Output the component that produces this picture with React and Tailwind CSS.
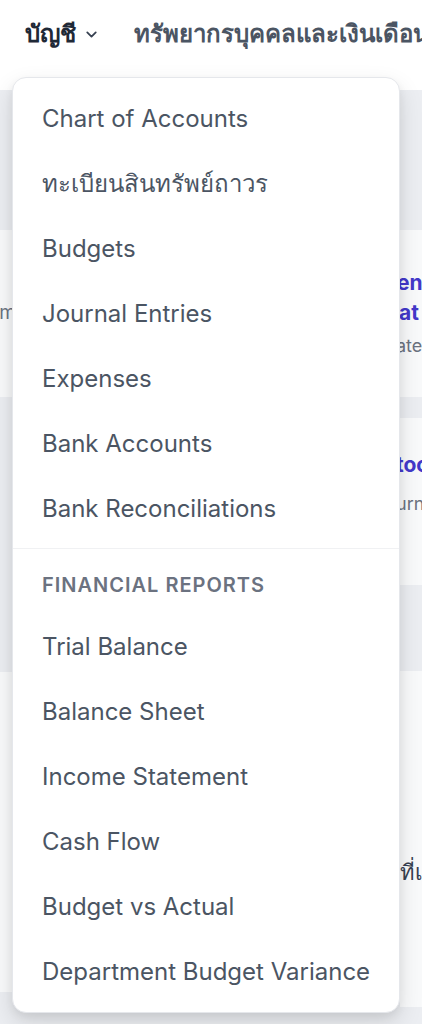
import React from 'react';

const mainItems = [
  'Chart of Accounts',
  'ทะเบียนสินทรัพย์ถาวร',
  'Budgets',
  'Journal Entries',
  'Expenses',
  'Bank Accounts',
  'Bank Reconciliations',
];

const reportItems = [
  'Trial Balance',
  'Balance Sheet',
  'Income Statement',
  'Cash Flow',
  'Budget vs Actual',
  'Department Budget Variance',
];

const MenuItem = ({ label }) => (
  <div className="h-[65px] flex items-center px-[29px] text-[24px] text-[#4b5563] whitespace-nowrap">
    {label}
  </div>
);

const App = () => {
  return (
    <div className="relative w-[422px] h-[1024px] overflow-hidden bg-[#eceef2] font-['Inter','Noto_Sans',sans-serif]">
      {/* top nav */}
      <div className="h-[90px] bg-white flex items-start pt-[16px] pl-[25px] gap-[34px] whitespace-nowrap">
        <div className="flex items-center gap-[7px]">
          <span className="text-[24px] font-bold text-[#1f2937]">บัญชี</span>
          <svg className="w-[17px] h-[17px] text-[#374151]" viewBox="0 0 24 24" fill="none" stroke="currentColor" strokeWidth={2.5} strokeLinecap="round" strokeLinejoin="round">
            <path d="M6 9l6 6 6-6" />
          </svg>
        </div>
        <span className="text-[24px] font-semibold text-[#4b5563]">ทรัพยากรบุคคลและเงินเดือน</span>
      </div>

      {/* page content behind the menu */}
      <div className="flex justify-between pt-[140px]">
        <div className="w-[12px] flex flex-col">
          <div className="h-[167px] bg-[#f9fafb] flex items-center justify-end overflow-hidden">
            <span className="text-[19px] text-[#6b7280] -mr-[4px]">m</span>
          </div>
          <div className="h-[320px] mt-[275px] bg-[#f9fafb]" />
        </div>
        <div className="w-[22px] flex flex-col">
          <div className="h-[167px] bg-[#f9fafb] overflow-hidden pt-[38px] whitespace-nowrap">
            <div className="-ml-[3px] text-[21px] font-bold text-[#4338ca] leading-[30px]">en</div>
            <div className="-ml-[1px] text-[21px] font-bold text-[#4338ca] leading-[30px]">at</div>
            <div className="-ml-[4px] mt-[6px] text-[18px] text-[#6b7280] leading-[24px]">ate</div>
          </div>
          <div className="h-[167px] mt-[21px] bg-[#f9fafb] overflow-hidden pt-[32px] whitespace-nowrap">
            <div className="-ml-[4px] text-[21px] font-bold text-[#4338ca] leading-[30px]">too</div>
            <div className="-ml-[4px] mt-[12px] text-[18px] text-[#6b7280] leading-[24px]">urn</div>
          </div>
          <div className="h-[336px] mt-[86px] bg-[#f9fafb] overflow-hidden pt-[186px] whitespace-nowrap">
            <div className="text-[22px] text-[#374151] leading-[30px]">ที่เ</div>
          </div>
        </div>
      </div>

      {/* dropdown menu */}
      <div className="absolute left-[12px] top-[77px] w-[388px] bg-white border border-[#e5e7eb] rounded-[14px] shadow-[0_10px_25px_rgba(0,0,0,0.12),0_4px_8px_rgba(0,0,0,0.06)] py-[8px]">
        {mainItems.map((item) => (
          <MenuItem key={item} label={item} />
        ))}
        <div className="my-[7px] border-t border-[#f0f1f3]" />
        <div className="px-[29px] pt-[17px] pb-[17px] text-[20px] leading-[24px] font-semibold tracking-[0.05em] text-[#6b7280] uppercase">
          Financial Reports
        </div>
        {reportItems.map((item) => (
          <MenuItem key={item} label={item} />
        ))}
      </div>
    </div>
  );
};

export default App;
